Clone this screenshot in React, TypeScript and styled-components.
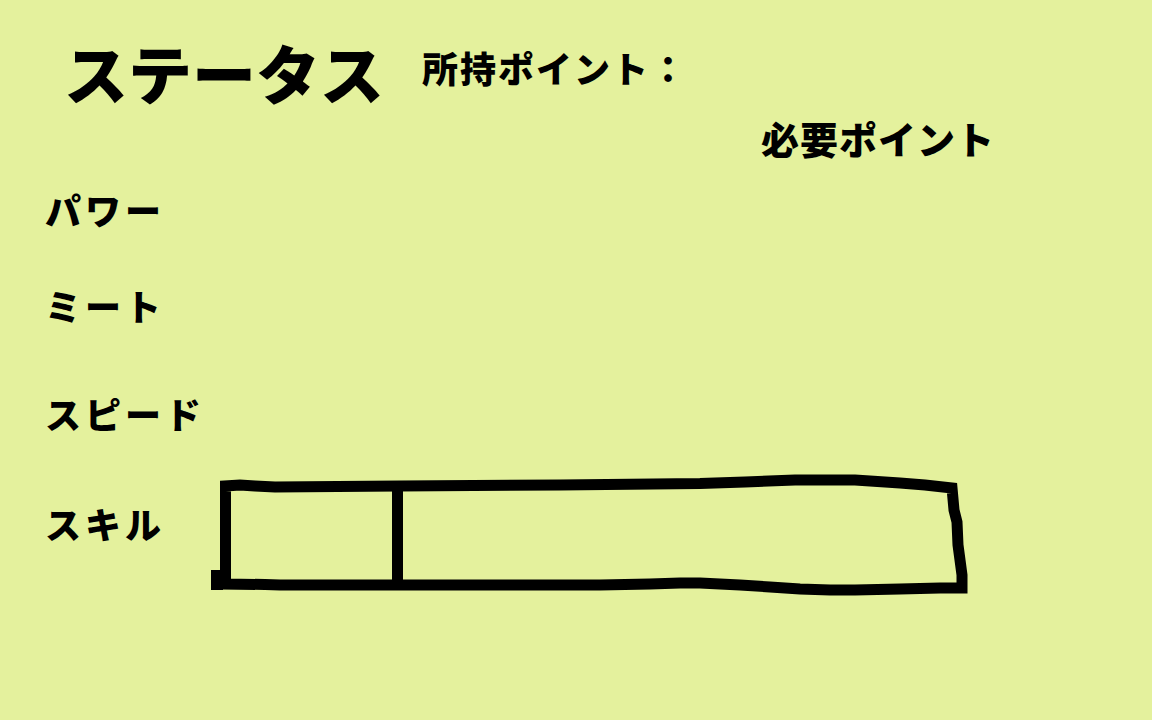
import React from 'react';
import styled, { createGlobalStyle } from 'styled-components';

const GlobalStyle = createGlobalStyle`
  html, body {
    margin: 0;
    padding: 0;
    background: #e4f19d;
  }
  body {
    font-family: 'Noto Sans CJK JP', 'Noto Sans', sans-serif;
    color: #000;
  }
`;

interface Stat {
  label: string;
  gap: number;
}

const stats: Stat[] = [
  { label: 'パワー', gap: 34 },
  { label: 'ミート', gap: 60 },
  { label: 'スピード', gap: 72 },
];

function SkillSlots() {
  // hand-drawn outline, coords are page coords shifted by the svg origin
  return (
    <SlotSvg width={770} height={130} viewBox="0 0 770 130">
      <g transform="translate(-205,-470)" fill="none" stroke="#000" strokeWidth={11} strokeLinejoin="miter">
        <rect x={211} y={570} width={12} height={20} fill="#000" stroke="none" />
        <path d="M225.5 584 L225.5 486 L240 485 L255 486 L275 487 L400 486 L560 485 L700 483.5 L745 482 L795 480 L855 480 L870 481 L900 483 L925 485 L952 488 L954 510 L957 522 L958 545 L960 560 L962 575 L962 588 L940 588 L900 589 L855 590 L830 590 L800 589 L770 587 L740 585 L700 583 L680 583 L650 584 L600 585 L480 585 L400 585 L280 585 L265 584.5 L225.5 584 Z" />
        <path d="M397.5 486 L397.5 585" />
      </g>
    </SlotSvg>
  );
}

export default function App() {
  return (
    <>
      <GlobalStyle />
      <Page>
        <Header>
          <Title>ステータス</Title>
          <Points>所持ポイント：</Points>
        </Header>
        <Required>必要ポイント</Required>
        {stats.map((s) => (
          <StatRow key={s.label} $gap={s.gap}>
            <Label>{s.label}</Label>
          </StatRow>
        ))}
        <StatRow $gap={39}>
          <Label $offset={35}>スキル</Label>
          <SkillSlots />
        </StatRow>
      </Page>
    </>
  );
}

const Page = styled.div`
  width: 1152px;
  height: 720px;
  box-sizing: border-box;
  padding-top: 39px;
  display: flex;
  flex-direction: column;
  overflow: hidden;
`;

const Header = styled.div`
  display: flex;
  align-items: flex-start;
  padding-left: 64px;
`;

const Title = styled.h1`
  margin: 0;
  font-size: 64px;
  line-height: 1;
  font-weight: 900;
  white-space: nowrap;
`;

const Points = styled.div`
  margin: 9.5px 0 0 38px;
  font-size: 36px;
  line-height: 1;
  font-weight: 900;
  letter-spacing: 2px;
  white-space: nowrap;
`;

const Required = styled.div`
  margin-top: 15.5px;
  padding-left: 761px;
  font-size: 38px;
  line-height: 1;
  font-weight: 900;
  letter-spacing: 1px;
  white-space: nowrap;
`;

const StatRow = styled.div<{ $gap: number }>`
  display: flex;
  align-items: flex-start;
  margin-top: ${({ $gap }) => $gap}px;
  padding-left: 45px;
`;

const Label = styled.div<{ $offset?: number }>`
  width: 160px;
  margin-top: ${({ $offset }) => $offset ?? 0}px;
  font-size: 36px;
  line-height: 1;
  font-weight: 900;
  letter-spacing: 4px;
  white-space: nowrap;
`;

const SlotSvg = styled.svg`
  display: block;
  flex-shrink: 0;
`;
